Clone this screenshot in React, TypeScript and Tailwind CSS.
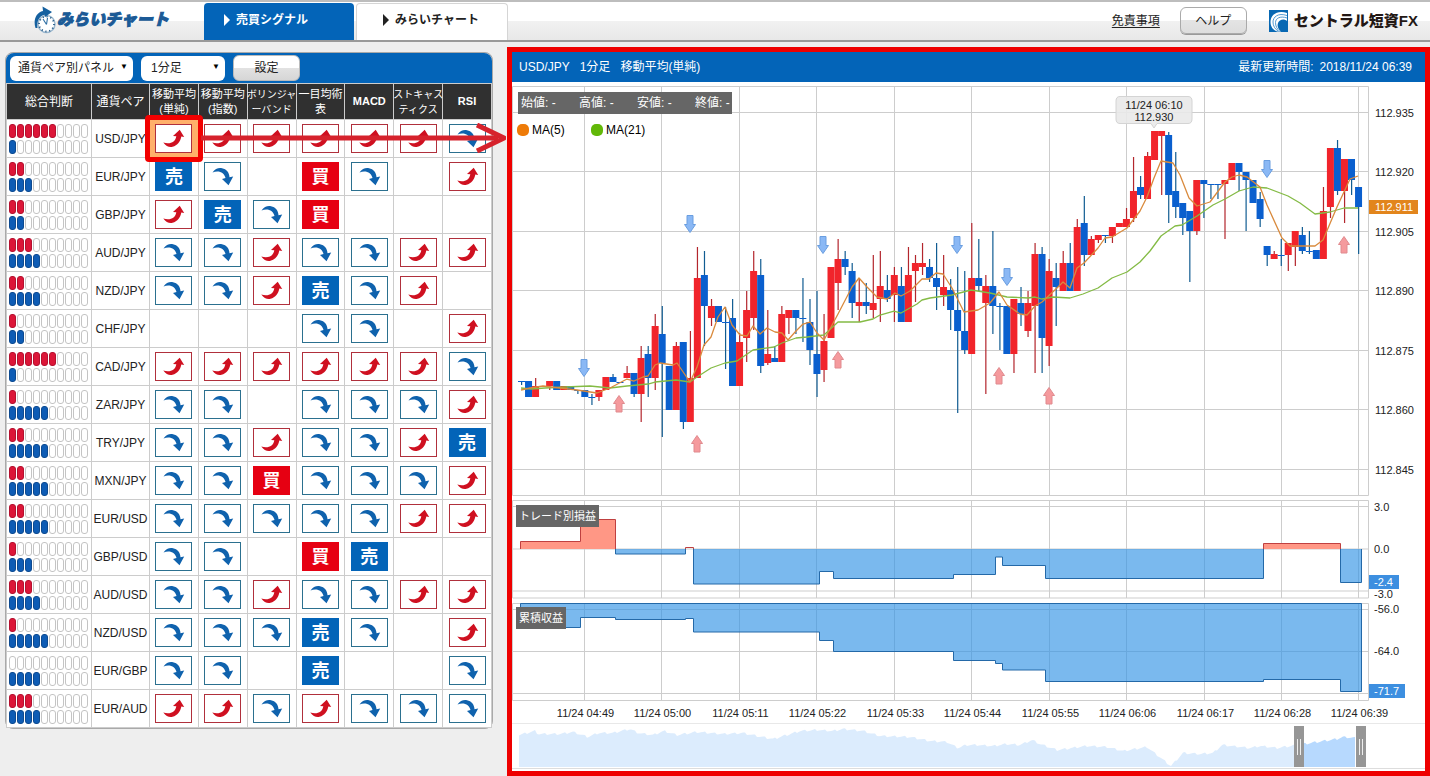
import React, { useState } from 'react';

type Mark = 'U' | 'D' | 'S' | 'B' | '-';

// --- Signal table data ---
const columns = [
  { lines: ['移動平均', '(単純)'], size: 'text-[11px]' },
  { lines: ['移動平均', '(指数)'], size: 'text-[11px]' },
  { lines: ['ボリンジャ', 'ーバンド'], size: 'text-[10px]' },
  { lines: ['一目均術', '表'], size: 'text-[11px]' },
  { lines: ['MACD'], size: 'text-[11px]' },
  { lines: ['ストキャス', 'ティクス'], size: 'text-[10px]' },
  { lines: ['RSI'], size: 'text-[11px]' },
];

// U = up, D = down, S = sell, B = buy
const pairs = [
  { name: 'USD/JPY', buy: 6, sell: 1, marks: 'UUUUUUD' },
  { name: 'EUR/JPY', buy: 2, sell: 3, marks: 'SD-BD-U' },
  { name: 'GBP/JPY', buy: 2, sell: 2, marks: 'USDB---' },
  { name: 'AUD/JPY', buy: 3, sell: 4, marks: 'DDUDDUU' },
  { name: 'NZD/JPY', buy: 2, sell: 4, marks: 'DDUSDU-' },
  { name: 'CHF/JPY', buy: 1, sell: 2, marks: '---DD-U' },
  { name: 'CAD/JPY', buy: 6, sell: 1, marks: 'UUUUUUD' },
  { name: 'ZAR/JPY', buy: 1, sell: 5, marks: 'DD-DDDU' },
  { name: 'TRY/JPY', buy: 2, sell: 5, marks: 'DDUDDUS' },
  { name: 'MXN/JPY', buy: 2, sell: 5, marks: 'DDBDDDU' },
  { name: 'EUR/USD', buy: 2, sell: 5, marks: 'DDDDDUU' },
  { name: 'GBP/USD', buy: 1, sell: 3, marks: 'DD-BS--' },
  { name: 'AUD/USD', buy: 3, sell: 4, marks: 'DDUDDUU' },
  { name: 'NZD/USD', buy: 1, sell: 5, marks: 'DDDSD-U' },
  { name: 'EUR/GBP', buy: 0, sell: 4, marks: 'DD-S--D' },
  { name: 'EUR/AUD', buy: 3, sell: 4, marks: 'UUDUDDD' },
];

// --- Candles: [high, body top, body bottom, low, 1 = up / 0 = down] ---
const candles = [
  [381, 381, 382, 385, 0], [381, 381, 397, 397, 0], [378, 386, 397, 397, 1], [386, 386, 387, 387, 1],
  [381, 381, 386, 390, 1], [381, 381, 390, 390, 0], [386, 386, 390, 390, 1], [386, 386, 390, 390, 0],
  [390, 390, 391, 394, 0], [390, 390, 397, 397, 0], [394, 397, 398, 405, 0], [390, 390, 397, 401, 1],
  [377, 377, 390, 390, 1], [374, 377, 382, 382, 0], [382, 382, 383, 383, 0], [366, 373, 378, 378, 1],
  [373, 373, 394, 397, 0], [346, 358, 394, 422, 1], [346, 354, 378, 397, 0], [314, 326, 378, 390, 1],
  [306, 334, 363, 437, 0], [366, 366, 410, 410, 0], [342, 346, 410, 410, 1], [342, 342, 422, 429, 0],
  [331, 378, 422, 422, 1], [247, 278, 378, 378, 1], [251, 275, 306, 346, 0], [299, 306, 318, 326, 1],
  [306, 306, 322, 322, 0], [307, 322, 323, 369, 0], [299, 318, 386, 386, 0], [333, 342, 386, 386, 1],
  [291, 310, 338, 362, 1], [251, 271, 318, 330, 1], [259, 275, 366, 373, 0], [310, 354, 363, 365, 1],
  [346, 358, 362, 362, 0], [306, 314, 362, 362, 1], [310, 310, 318, 334, 1], [310, 310, 318, 334, 0],
  [278, 318, 319, 342, 0], [299, 322, 350, 365, 0], [291, 354, 374, 397, 0], [314, 341, 370, 382, 1],
  [267, 267, 338, 338, 1], [239, 259, 283, 310, 1], [251, 259, 267, 275, 0], [263, 271, 303, 318, 0],
  [279, 302, 306, 322, 1], [283, 302, 306, 314, 0], [255, 303, 310, 318, 1], [251, 286, 299, 322, 1],
  [275, 290, 299, 302, 0], [267, 275, 295, 322, 1], [267, 286, 322, 322, 0], [247, 275, 322, 322, 1],
  [255, 263, 271, 302, 1], [243, 263, 267, 275, 1], [259, 267, 278, 282, 0], [243, 278, 287, 310, 0],
  [255, 287, 295, 306, 1], [279, 290, 310, 330, 0], [267, 310, 331, 413, 0], [271, 331, 350, 354, 0],
  [223, 278, 354, 354, 1], [239, 278, 286, 291, 0], [275, 286, 303, 394, 1], [231, 286, 306, 334, 0],
  [303, 306, 307, 350, 0], [306, 306, 354, 354, 0], [299, 299, 354, 373, 1], [287, 303, 314, 326, 0],
  [291, 303, 331, 337, 1], [243, 254, 306, 373, 1], [247, 254, 338, 373, 0], [259, 271, 346, 366, 1],
  [263, 278, 287, 326, 0], [251, 263, 291, 291, 1], [243, 263, 291, 291, 0], [219, 227, 291, 291, 1],
  [196, 223, 255, 266, 0], [236, 239, 255, 255, 1], [235, 235, 240, 243, 1], [235, 235, 236, 243, 0],
  [227, 227, 236, 243, 1], [223, 223, 227, 227, 1], [208, 219, 227, 227, 1], [157, 191, 218, 222, 1],
  [176, 187, 195, 199, 0], [152, 156, 199, 199, 1], [131, 131, 160, 160, 1], [131, 131, 136, 195, 1],
  [132, 135, 195, 223, 0], [152, 191, 207, 218, 0], [203, 203, 218, 235, 0], [211, 211, 231, 282, 0],
  [180, 180, 231, 235, 1], [180, 180, 184, 218, 0], [184, 184, 185, 199, 0], [184, 184, 185, 199, 0],
  [180, 180, 184, 239, 1], [163, 163, 180, 180, 1], [163, 163, 172, 191, 0], [172, 172, 180, 231, 0],
  [180, 180, 203, 203, 0], [192, 199, 219, 227, 0], [246, 246, 255, 266, 0], [251, 254, 259, 259, 1],
  [239, 255, 256, 266, 0], [243, 243, 255, 271, 1], [231, 231, 247, 266, 1], [227, 235, 251, 254, 0],
  [231, 251, 252, 254, 0], [250, 250, 259, 259, 0], [187, 211, 259, 259, 1], [148, 148, 207, 218, 1],
  [140, 148, 191, 195, 0], [159, 159, 191, 223, 1], [159, 159, 180, 195, 0], [187, 187, 207, 254, 0],
];

const ma5 =
  '521,390 530,388 543,386 560,388 577,390 597,393 610,388 627,379 634,381 643,377 648,376 655,365 660,363 673,365 677,363 690,382 697,367 704,345 711,337 718,317 725,307 732,325 740,335 747,336 753,326 760,334 767,328 775,332 782,333 788,340 796,331 803,324 810,322 817,333 824,340 838,314 852,287 859,278 867,287 877,297 887,299 895,293 901,296 910,291 922,279 929,279 936,273 943,274 952,288 964,312 978,310 990,303 999,292 1007,305 1020,314 1027,315 1035,306 1042,302 1057,288 1063,282 1070,288 1077,268 1084,263 1098,248 1105,238 1112,237 1127,228 1140,211 1147,197 1154,178 1161,161 1173,163 1180,175 1189,198 1197,206 1210,202 1225,182 1232,177 1239,175 1247,177 1260,187 1267,205 1282,238 1290,246 1315,246 1323,240 1337,207 1350,179 1358,176';

const ma21 =
  '521,388 531,389 545,388 565,387 590,386 610,388 627,386 648,384 655,382 676,380 690,382 697,377 711,368 725,363 737,361 753,350 774,347 782,343 796,338 807,337 824,335 838,322 860,322 873,319 880,315 894,311 901,313 917,304 922,300 930,298 952,295 971,290 990,293 1007,297 1028,298 1035,297 1042,299 1053,297 1070,298 1083,294 1098,288 1112,278 1127,272 1140,262 1150,251 1161,236 1175,226 1182,225 1197,216 1213,205 1225,199 1239,191 1253,187 1267,188 1288,196 1300,203 1315,214 1330,212 1344,208 1358,208';

const timeAxis = [
  { x: 584.5, label: '11/24 04:49' },
  { x: 661.5, label: '11/24 05:00' },
  { x: 739.5, label: '11/24 05:11' },
  { x: 816.5, label: '11/24 05:22' },
  { x: 894.5, label: '11/24 05:33' },
  { x: 971.5, label: '11/24 05:44' },
  { x: 1049.5, label: '11/24 05:55' },
  { x: 1126.5, label: '11/24 06:06' },
  { x: 1204.5, label: '11/24 06:17' },
  { x: 1281.5, label: '11/24 06:28' },
  { x: 1358.5, label: '11/24 06:39' },
];

const priceAxis = [
  { y: 112.5, label: '112.935' },
  { y: 171.5, label: '112.920' },
  { y: 231.5, label: '112.905' },
  { y: 290.5, label: '112.890' },
  { y: 350.5, label: '112.875' },
  { y: 409.5, label: '112.860' },
  { y: 469.5, label: '112.845' },
];

const sellArrows = [[584, 359], [690, 215], [823, 236], [957, 236], [1007, 268], [1267, 160]];
const buyArrows = [[619, 395], [697, 435], [838, 351], [999, 367], [1049, 387], [1344, 236]];

const overview = [
  [519, 735], [535, 731], [538, 734], [560, 734], [573, 732], [588, 737], [598, 733], [613, 733], [630, 729],
  [638, 733], [653, 735], [664, 731], [677, 735], [697, 732], [723, 734], [743, 733], [757, 736], [773, 739],
  [787, 735], [800, 731], [817, 730], [833, 731], [843, 729], [863, 731], [880, 736], [910, 737], [930, 741],
  [947, 742], [958, 748], [966, 745], [977, 745], [993, 746], [1007, 744], [1020, 745], [1032, 740],
  [1040, 744], [1057, 750], [1087, 746], [1107, 747], [1123, 751], [1147, 747], [1157, 755], [1171, 766],
  [1183, 753], [1200, 754], [1213, 753], [1222, 745], [1250, 748], [1260, 746], [1277, 748], [1297, 745],
  [1317, 742], [1337, 739], [1343, 737], [1355, 738],
];

// small ragged steps between the overview points
const overviewPath = (from: number, to: number) => {
  const pts: string[] = [];
  for (let x = from; x <= to; x += 2) {
    const i = Math.max(1, overview.findIndex((p) => p[0] >= x));
    const [x0, y0] = overview[i - 1];
    const [x1, y1] = overview[i];
    const y = y0 + ((y1 - y0) * (x - x0)) / (x1 - x0) + ((x * 7) % 5) * 0.5 - 1;
    pts.push(`${x},${y.toFixed(1)}`);
  }
  return `${from},767 ${pts.join(' ')} ${to},767`;
};

// --- Icons and logos ---
const SignalIcon = ({ mark }: { mark: Mark }) => {
  if (mark === '-') return null;
  if (mark === 'S' || mark === 'B') {
    return (
      <span
        className={`mx-auto flex h-[29px] w-[37px] items-center justify-center text-lg leading-none font-bold text-white ${
          mark === 'S' ? 'bg-[#0364b8]' : 'bg-[#e60012]'
        }`}
      >
        {mark === 'S' ? '売' : '買'}
      </span>
    );
  }
  const up = mark === 'U';
  return (
    <svg width="37" height="29" viewBox="0 0 37 29" className="mx-auto block">
      <rect x="0.5" y="0.5" width="36" height="28" fill="#fff" stroke={up ? '#b0303c' : '#2b708f'} />
      {up ? (
        <path d="M8.300 18.500C11 22.500 14.500 23.500 17.500 22.800C22.500 21.500 25.500 17.500 26.300 12.500L29.200 13L24.700 5.800L18 12L21.300 12.300C20.500 18 15 20.800 8.300 18.500Z" fill="#cf1020" />
      ) : (
        <path d="M8.500 10.500C11 6.800 14.500 5.500 18 6.200C22.500 7 25.300 10.500 25.500 15.300L29.200 14.500L24.500 23.200L18 17L21.500 16C20.500 11 15 7.800 8.500 10.500Z" fill="#0f62ad" />
      )}
    </svg>
  );
};

const ClockLogo = () => (
  <svg width="23" height="28" viewBox="0 0 23 28" aria-hidden="true">
    <circle cx="12.500" cy="18" r="8.500" fill="#fff" stroke="#9db9cf" strokeWidth="1.500" />
    <circle cx="12.500" cy="18" r="7.500" fill="none" stroke="#2c5f8c" strokeWidth="1.800" strokeDasharray="1.200 2.700" />
    <path d="M12.500 18.500L9 13M12.500 18.500L13.500 12" stroke="#2c6da3" strokeWidth="1.100" fill="none" />
    <path d="M1.500 22C-1 14 2 6.500 9 5L8.500 0.500L18 6L11 11L10.500 8.800C5.500 10 2.500 15 3.500 22Z" fill="#15609f" />
  </svg>
);

const CentralLogo = () => (
  <svg width="19" height="22" viewBox="0 0 19 22" aria-hidden="true">
    <rect width="19" height="22" fill="#0868b3" />
    <path d="M18 3C8 0 1.500 5 1.500 12C1.500 16.500 4 20 8 21.500H12C8 18 7.500 13 11 10.500C13.500 9 16 9.500 18 11Z" fill="#fff" />
    <path d="M18 5.500C9 2.500 4 7 4 12C4 16 6 19 9 21M18 8C11 5.500 6.500 8.500 6.500 12.500C6.500 16 8 19 10.500 21" stroke="#3f8fcd" strokeWidth="0.900" fill="none" />
  </svg>
);

// --- Gauge of buy / sell counts ---
const Gauge = ({ count, color }: { count: number; color: string }) => (
  <div className="flex gap-px">
    {Array.from({ length: 10 }).map((_, i) => (
      <span
        key={i}
        className={`h-[14px] w-[7px] rounded-[3px] border ${i < count ? color : 'border-[#c4c4c4] bg-white'}`}
      />
    ))}
  </div>
);

const Header = () => (
  <header className="flex h-[42px] items-start justify-between border-t-2 border-b-2 border-t-[#bdbdbd] border-b-[#999] bg-[linear-gradient(#fff_50%,#f1f1f1_50%,#e8e8e8)]">
    <div className="flex items-start">
      <h1 className="flex w-[204px] items-center pt-1 pl-[34px]">
        <ClockLogo />
        <span className="text-base font-black text-[#1b5a96] italic [-webkit-text-stroke:1px_#1b5a96]">みらいチャート</span>
      </h1>
      <nav className="flex gap-[2px] pt-px text-xs font-bold">
        <a href="#signal" className="flex h-[37px] w-[150px] items-center gap-[6px] rounded-t-sm bg-[#0364b8] pb-1 pl-5 text-white">
          <svg width="6" height="12" viewBox="0 0 6 12"><path d="M0 0L6 6L0 12Z" fill="currentColor" /></svg>
          売買シグナル
        </a>
        <a href="#chart" className="flex h-[37px] w-[152px] items-center gap-[6px] rounded-t-sm border border-b-0 border-[#d5d5d5] bg-white pb-1 pl-[26px] text-[#222]">
          <svg width="6" height="12" viewBox="0 0 6 12"><path d="M0 0L6 6L0 12Z" fill="currentColor" /></svg>
          みらいチャート
        </a>
      </nav>
    </div>
    <div className="flex items-center pt-[5px] pr-3">
      <a href="#disclaimer" className="mr-5 text-xs text-[#222] underline underline-offset-2">免責事項</a>
      <button className="mr-[22px] h-[27px] w-[67px] rounded-md border border-[#aaa] bg-[linear-gradient(#fff_50%,#e4e4e4_50%,#ddd)] text-xs text-[#222] shadow-[0_1px_0_#999]">
        ヘルプ
      </button>
      <CentralLogo />
      <span className="ml-[6px] text-[15px] leading-5 font-black text-[#231815]">セントラル短資FX</span>
    </div>
  </header>
);

// --- Left panel ---
const SignalPanel = () => {
  const [view, setView] = useState('pair');
  const [span, setSpan] = useState('1m');

  return (
    <aside className="mt-[10px] shrink-0 self-start rounded-lg border border-[#a9a9a9] bg-[#d9d9d9]">
      <div className="flex h-[30px] items-center gap-2 rounded-t-lg bg-[#0364b8] px-1">
        <div className="relative">
          <select
            aria-label="表示パネル"
            value={view}
            onChange={(e) => setView(e.target.value)}
            className="h-[25px] w-[123px] appearance-none rounded-md bg-white pl-2 text-xs text-[#222]"
          >
            <option value="pair">通貨ペア別パネル</option>
          </select>
          <span className="pointer-events-none absolute top-[6px] right-[5px] text-[8px] leading-3 text-black">▼</span>
        </div>
        <div className="relative">
          <select
            aria-label="足種"
            value={span}
            onChange={(e) => setSpan(e.target.value)}
            className="h-[25px] w-[84px] appearance-none rounded-md bg-white pl-[10px] text-xs text-[#222]"
          >
            <option value="1m">1分足</option>
          </select>
          <span className="pointer-events-none absolute top-[6px] right-[5px] text-[8px] leading-3 text-black">▼</span>
        </div>
        <button className="h-[26px] w-[67px] rounded-md border border-[#bbb] bg-[linear-gradient(#fff_50%,#e2e2e2_50%,#d6d6d6)] text-xs text-[#222]">
          設定
        </button>
      </div>

      <table className="w-[486px] table-fixed border-collapse bg-white">
        <colgroup>
          <col className="w-[85px]" />
          <col className="w-[58px]" />
          {columns.map((col, i) => (
            <col key={i} />
          ))}
        </colgroup>
        <thead>
          <tr className="h-9 bg-[#303030] text-white">
            <th className="border border-[#ccc] p-0 text-xs font-normal">総合判断</th>
            <th className="border border-[#ccc] p-0 text-xs font-normal whitespace-nowrap">通貨ペア</th>
            {columns.map((col, i) => (
              <th
                key={i}
                className={`border border-[#ccc] p-0 leading-[15px] whitespace-nowrap ${col.size} ${
                  col.lines.length > 1 ? 'font-normal' : 'font-bold'
                }`}
              >
                {col.lines.map((line) => (
                  <span key={line} className="-mx-1 block">{line}</span>
                ))}
              </th>
            ))}
          </tr>
        </thead>
        <tbody>
          {pairs.map((pair, row) => (
            <tr key={pair.name} className="h-[38px]">
              <td className="border border-[#ccc] p-0 pl-[2px]">
                <div className="flex flex-col gap-[2px]">
                  <Gauge count={pair.buy} color="border-[#b5102f] bg-[#dc1638]" />
                  <Gauge count={pair.sell} color="border-[#0d4a90] bg-[#0e5cb5]" />
                </div>
              </td>
              <td className="border border-[#ccc] p-0 text-center text-xs text-[#222]">{pair.name}</td>
              {pair.marks.split('').map((mark, i) => {
                const selected = row === 0 && i === 0;
                return (
                  <td key={i} className={`relative border border-[#ccc] p-0 ${selected ? 'bg-[#ffb06a]' : ''}`}>
                    <SignalIcon mark={mark as Mark} />
                    {selected && (
                      <>
                        <span className="absolute -inset-[5px] z-10 rounded-sm border-[5px] border-[#f20000]" />
                        <svg width="308" height="30" viewBox="0 0 308 30" className="absolute top-[3px] left-full z-10 max-w-none">
                          <path d="M3 15H300" stroke="#d6222c" strokeWidth="5" />
                          <path d="M279 2L306 15L279 28" stroke="#d6222c" strokeWidth="5" fill="none" strokeLinejoin="round" />
                        </svg>
                      </>
                    )}
                  </td>
                );
              })}
            </tr>
          ))}
        </tbody>
      </table>
    </aside>
  );
};

// --- Right panel ---
const PriceChart = () => (
  <svg viewBox="512 82 913 642" className="block h-auto w-full text-[11px]" fill="#222">
    {/* grid */}
    <g stroke="#cdcdcd" fill="none">
      <path d="M512.500 86.500H1368.500V495.500H512.500Z" />
      <path d="M512.500 500.500H1368.500V598H512.500Z" />
      <path d="M512.500 603.500H1368.500V700.500H512.500Z" />
      {priceAxis.map((p) => (
        <path key={p.label} d={`M512 ${p.y}H1368`} />
      ))}
      {timeAxis.map((t) => (
        <path key={t.label} d={`M${t.x} 87V495M${t.x} 501V598M${t.x} 604V700`} />
      ))}
      <path d="M512 506.500H1368M512 549H1368M512 591H1368M512 609.500H1368M512 651.500H1368M512 693.500H1368" />
      <path d="M512 723.500H1425" stroke="#e8e8e8" />
    </g>

    {/* candles */}
    {candles.map(([high, top, bottom, low, up], i) => {
      const x = 521.5 + i * 7.034;
      return (
        <g key={i} fill={up ? '#f1242b' : '#0a5fce'}>
          <rect x={x - 0.5} y={high} width="1.2" height={low - high} fill={up ? '#b3262d' : '#115c92'} />
          <rect x={x - 3.5} y={top} width="7" height={bottom - top} />
        </g>
      );
    })}
    <polyline points={ma21} fill="none" stroke="#84bb45" strokeWidth="1.3" strokeLinejoin="round" />
    <polyline points={ma5} fill="none" stroke="#d98a3d" strokeWidth="1.3" strokeLinejoin="round" />

    {/* trade markers */}
    {sellArrows.map(([x, y]) => (
      <path key={x} d={`M${x - 3} ${y + 0.5}h6v9h2.500l-5.500 8l-5.500 -8h2.500Z`} fill="#8ab8f5" stroke="#6a9ee0" />
    ))}
    {buyArrows.map(([x, y]) => (
      <path key={x} d={`M${x - 3} ${y + 17}h6v-8.500h2.500l-5.500 -8l-5.500 8h2.500Z`} fill="#f59a9d" stroke="#e08a8e" />
    ))}

    {/* high balloon */}
    <path
      d="M1120 96.500H1188Q1192 96.500 1192 101V119Q1192 123.500 1188 123.500H1157L1154 128L1151 123.500H1120Q1116 123.500 1116 119V101Q1116 96.500 1120 96.500Z"
      fill="#e9e9e9" fillOpacity="0.9" stroke="#d4d4d4"
    />
    <text x="1154" y="109" textAnchor="middle">11/24 06:10</text>
    <text x="1154" y="121" textAnchor="middle">112.930</text>

    {/* profit per trade */}
    <path d="M520.500 549V541.500H580.500V519.500H615.500V549ZM1263.500 549V543.500H1340.500V549Z" fill="#ff9785" />
    <path
      d="M615.500 549V554H685.500V549ZM693.500 549V584H819.500V571.500H833.500V578.500H953.500V574.500H995.500V557H1002.500V565.500H1045.500V578.500H1263.500V549ZM1340.500 549V582.500H1361.500V549Z"
      fill="#3294e5" fillOpacity="0.65"
    />
    <path
      d="M615.500 549V554H685.500V549M693.500 549V584H819.500V571.500H833.500V578.500H953.500V574.500H995.500V557H1002.500V565.500H1045.500V578.500H1263.500V549M1340.500 549V582.500H1361.500V549"
      fill="none" stroke="#2469a8"
    />
    <path d="M520.500 549V541.500H580.500V519.500H615.500V549M685.500 549V547.500H693.500V549M1263.500 549V543.500H1340.500V549" fill="none" stroke="#bf4040" />

    {/* cumulative profit */}
    <path
      d="M520.500 603.500V627.500H580.500V617.500H615.500V619.500H685.500V618.500H693.500V632H819.500V640.500H833.500V651.500H953.500V660.500H995.500V663.500H1002.500V670H1045.500V681.500H1263.500V679.500H1340.500V691.500H1361.500V603.500Z"
      fill="#3294e5" fillOpacity="0.65" stroke="#2469a8"
    />

    {/* axis labels */}
    {priceAxis.map((p) => (
      <text key={p.label} x="1375" y={p.y + 4}>{p.label}</text>
    ))}
    <text x="1374" y="511">3.0</text>
    <text x="1374" y="553">0.0</text>
    <text x="1374" y="598">-3.0</text>
    <text x="1374" y="613">-56.0</text>
    <text x="1374" y="655">-64.0</text>
    {timeAxis.map((t) => (
      <text key={t.label} x={t.x + 1} y="717" textAnchor="middle">{t.label}</text>
    ))}
    <rect x="1369" y="200" width="49" height="14" fill="#e2851c" />
    <text x="1375" y="211" fill="#fff">112.911</text>
    <rect x="1369" y="575" width="30" height="14" fill="#3d8fe0" />
    <text x="1374" y="586" fill="#fff">-2.4</text>
    <rect x="1369" y="684" width="36" height="14" fill="#3d8fe0" />
    <text x="1374" y="695" fill="#fff">-71.7</text>
  </svg>
);

const thumb =
  'pointer-events-none absolute top-[2px] left-0 h-[41px] w-full appearance-none bg-transparent [&::-webkit-slider-thumb]:pointer-events-auto [&::-webkit-slider-thumb]:h-[41px] [&::-webkit-slider-thumb]:w-[10px] [&::-webkit-slider-thumb]:appearance-none [&::-webkit-slider-thumb]:bg-[#969696] [&::-webkit-slider-thumb]:bg-[linear-gradient(90deg,#969696_3px,#eee_3px,#eee_4px,#969696_4px,#969696_6px,#eee_6px,#eee_7px,#969696_7px)] [&::-webkit-slider-thumb]:bg-[length:10px_16px] [&::-webkit-slider-thumb]:bg-center [&::-webkit-slider-thumb]:bg-no-repeat';

const RangeNavigator = () => {
  const [start, setStart] = useState(782);
  const [end, setEnd] = useState(844);

  return (
    <div className="relative">
      <svg viewBox="512 724 913 47" className="block h-auto w-full">
        <polygon points={overviewPath(519, 1303)} fill="#dcecfd" />
        <polygon points={overviewPath(1299, 1355)} fill="#b7d9fe" />
        <path d="M512 768.500H1425" stroke="#ddd" />
      </svg>
      <input type="range" aria-label="開始" min={0} max={903} value={start} onChange={(e) => setStart(+e.target.value)} className={thumb} />
      <input type="range" aria-label="終了" min={0} max={903} value={end} onChange={(e) => setEnd(+e.target.value)} className={thumb} />
    </div>
  );
};

const ChartPanel = () => (
  <section className="mt-[5px] flex min-w-0 flex-1 flex-col border-[5px] border-[#ee0000] bg-white">
    <div className="flex h-[30px] items-center justify-between bg-[#0364b8] pr-[13px] pl-[7px] text-xs text-white">
      <h2 className="flex gap-[10px]">
        <span>USD/JPY</span>
        <span>1分足</span>
        <span>移動平均(単純)</span>
      </h2>
      <p className="flex gap-[6px]">
        <span>最新更新時間:</span>
        <span>2018/11/24 06:39</span>
      </p>
    </div>
    <div className="relative">
      <PriceChart />
      <div className="absolute top-[10px] left-[6px] flex h-[22px] w-[214px] items-center bg-[#666] pl-[3px] text-xs text-white">
        {['始値: -', '高値: -', '安値: -', '終値: -'].map((item) => (
          <span key={item} className="w-[58px] shrink-0">{item}</span>
        ))}
      </div>
      <div className="absolute top-10 left-[5px] flex text-xs text-black">
        <span className="flex w-[74px] items-center gap-[3px]">
          <span className="h-3 w-3 rounded-[5px] bg-[#ee7b08]" />
          MA(5)
        </span>
        <span className="flex items-center gap-[3px]">
          <span className="h-3 w-3 rounded-[5px] bg-[#62b808]" />
          MA(21)
        </span>
      </div>
      <span className="absolute top-[423px] left-1 flex h-[22px] items-center bg-[#666] px-[3px] text-[11px] text-white">トレード別損益</span>
      <span className="absolute top-[525px] left-1 flex h-[22px] items-center bg-[#666] px-[3px] text-[11px] text-white">累積収益</span>
    </div>
    <RangeNavigator />
  </section>
);

const App: React.FC = () => {
  return (
    <div className="flex min-h-screen flex-col bg-[#eeeeee] [font-family:'Liberation_Sans','Noto_Sans_CJK_JP',sans-serif]">
      <Header />
      <main className="flex flex-1 gap-[14px] pl-[5px]">
        <SignalPanel />
        <ChartPanel />
      </main>
    </div>
  );
};

export default App;
